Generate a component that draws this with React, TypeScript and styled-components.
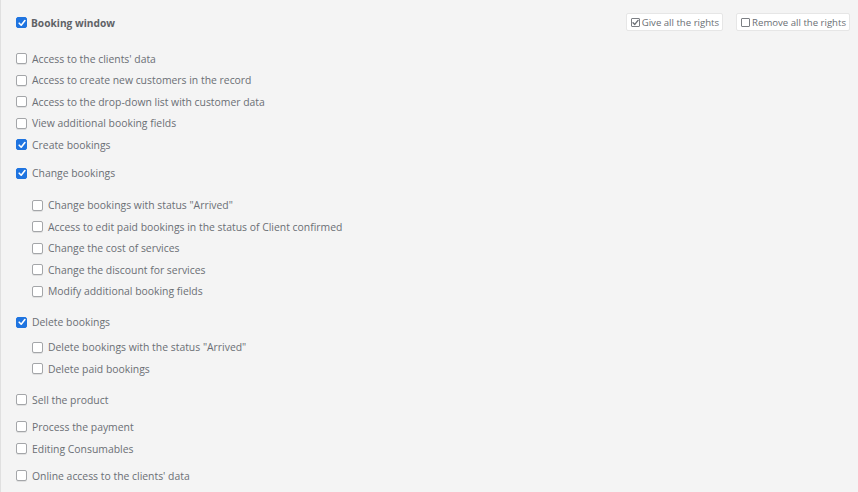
import React from "react";
import styled, { createGlobalStyle } from "styled-components";

const Global = createGlobalStyle`
  html, body { margin: 0; padding: 0; background: #f4f4f4; }
  body { font-family: "Open Sans", "Liberation Sans", sans-serif; }
`;

const Page = styled.div`
  box-sizing: border-box;
  width: 858px;
  height: 492px;
  border-left: 1px solid #e0e0e0;
  padding: 8px 8px 0 15px;
  overflow: hidden;
`;

const Header = styled.div`
  display: flex;
  align-items: center;
  justify-content: space-between;
  height: 28px;
`;

const Title = styled.label`
  display: flex;
  align-items: center;
  gap: 4px;
  padding-top: 1px;
  font-size: 10.2px;
  font-weight: 700;
  color: #5f6266;
`;

const Actions = styled.div`
  display: flex;
  gap: 13px;
`;

const ActionButton = styled.button`
  display: flex;
  align-items: center;
  gap: 2px;
  height: 18px;
  padding: 0 3px 0 4px;
  background: #ffffff;
  border: 1px solid #e6e6e6;
  border-radius: 2px;
  font-family: "Open Sans", "Liberation Sans", sans-serif;
  font-size: 9.6px;
  color: #6b6f75;
  cursor: pointer;
`;

const MiniBox = styled.span`
  box-sizing: border-box;
  width: 9px;
  height: 9px;
  border: 1px solid #7c7f84;
  border-radius: 1px;
  display: flex;
  align-items: center;
  justify-content: center;
`;

const List = styled.div`
  margin-top: 12px;
  display: flex;
  flex-direction: column;
`;

const Row = styled.label<{ $indent?: number; $space?: number }>`
  display: flex;
  align-items: center;
  gap: 5px;
  height: 21.55px;
  margin-top: ${(p) => p.$space ?? 0}px;
  padding-left: ${(p) => (p.$indent ?? 0) * 16}px;
  font-size: 10.4px;
  color: #6b6f75;
`;

const Box = styled.span<{ $checked?: boolean }>`
  box-sizing: border-box;
  flex: none;
  width: 11px;
  height: 11px;
  border-radius: 2px;
  display: flex;
  align-items: center;
  justify-content: center;
  background: ${(p) => (p.$checked ? "#1f74e0" : "#ffffff")};
  border: 1px solid ${(p) => (p.$checked ? "#1f74e0" : "#a4a6a9")};
  box-shadow: ${(p) => (p.$checked ? "none" : "0 1px 0 rgba(0,0,0,0.08)")};
`;

const Check = ({ color = "#fff", size = 8 }: { color?: string; size?: number }) => (
  <svg width={size} height={size} viewBox="0 0 8 8">
    <path d="M1.2 4.2 L3.2 6.2 L6.9 1.6" fill="none" stroke={color} strokeWidth="1.6" strokeLinecap="round" strokeLinejoin="round" />
  </svg>
);

const CheckBox = ({ checked }: { checked?: boolean }) => (
  <Box $checked={checked}>{checked && <Check />}</Box>
);

type Item = { label: string; checked?: boolean; indent?: number; space?: number };

const items: Item[] = [
  { label: "Access to the clients' data" },
  { label: "Access to create new customers in the record" },
  { label: "Access to the drop-down list with customer data" },
  { label: "View additional booking fields" },
  { label: "Create bookings", checked: true },
  { label: "Change bookings", checked: true, space: 6.5 },
  { label: 'Change bookings with status "Arrived"', indent: 1, space: 10.5 },
  { label: "Access to edit paid bookings in the status of Client confirmed", indent: 1 },
  { label: "Change the cost of services", indent: 1 },
  { label: "Change the discount for services", indent: 1 },
  { label: "Modify additional booking fields", indent: 1 },
  { label: "Delete bookings", checked: true, space: 9.5 },
  { label: 'Delete bookings with the status "Arrived"', indent: 1, space: 3.5 },
  { label: "Delete paid bookings", indent: 1 },
  { label: "Sell the product", space: 9.5 },
  { label: "Process the payment", space: 5.5 },
  { label: "Editing Consumables" },
  { label: "Online access to the clients' data", space: 5.5 },
];

export default function App() {
  return (
    <>
      <Global />
      <Page>
        <Header>
          <Title>
            <CheckBox checked />
            Booking window
          </Title>
          <Actions>
            <ActionButton>
              <MiniBox>
                <Check color="#6b6f75" size={7} />
              </MiniBox>
              Give all the rights
            </ActionButton>
            <ActionButton>
              <MiniBox />
              Remove all the rights
            </ActionButton>
          </Actions>
        </Header>
        <List>
          {items.map((it) => (
            <Row key={it.label} $indent={it.indent} $space={it.space}>
              <CheckBox checked={it.checked} />
              {it.label}
            </Row>
          ))}
        </List>
      </Page>
    </>
  );
}
